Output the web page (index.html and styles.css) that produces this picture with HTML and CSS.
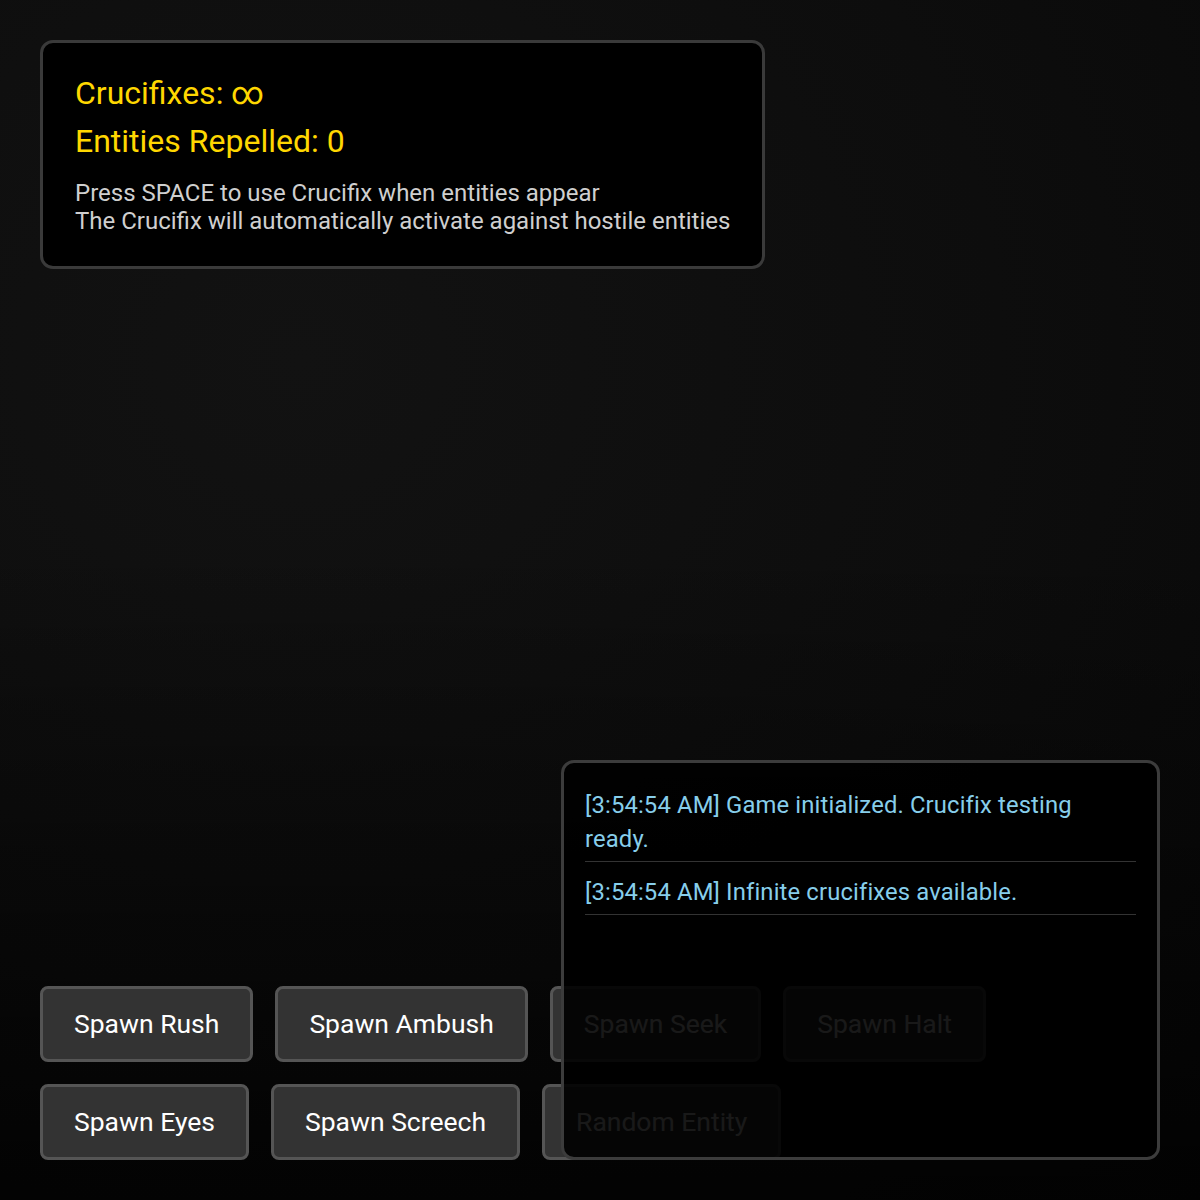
FILE: index.html
```html
<!DOCTYPE html>
<html lang="en">
<head>
<meta charset="utf-8">
<title>Crucifix Test</title>
<link rel="stylesheet" href="styles.css">
</head>
<body>
<div class="game">
  <div class="stats">
    <div class="stat-line">Crucifixes: <span class="inf">∞</span></div>
    <div class="stat-line">Entities Repelled: 0</div>
    <div class="help">
      <div>Press SPACE to use Crucifix when entities appear</div>
      <div>The Crucifix will automatically activate against hostile entities</div>
    </div>
  </div>

  <div class="controls">
    <button class="btn">Spawn Rush</button>
    <button class="btn">Spawn Ambush</button>
    <button class="btn">Spawn Seek</button>
    <button class="btn">Spawn Halt</button>
    <button class="btn">Spawn Eyes</button>
    <button class="btn">Spawn Screech</button>
    <button class="btn">Random Entity</button>
  </div>

  <div class="log">
    <div class="log-entry">[3:54:54 AM] Game initialized. Crucifix testing ready.</div>
    <div class="log-entry">[3:54:54 AM] Infinite crucifixes available.</div>
  </div>
</div>
</body>
</html>
```

FILE: styles.css
```css
* {
  box-sizing: border-box;
}

html, body {
  margin: 0;
  height: 100%;
}

body {
  font-family: Roboto, "Noto Sans", "Liberation Sans", sans-serif;
  color: #fff;
  background:
    linear-gradient(to bottom, rgba(0, 0, 0, 0) 45%, rgba(0, 0, 0, 0.75) 100%),
    radial-gradient(ellipse at 25% 30%, #121212 0%, #0d0d0d 55%, #080808 100%);
  overflow: hidden;
}

.game {
  position: relative;
  height: 100vh;
  padding: 40px;
  display: flex;
  flex-direction: column;
  align-items: flex-start;
}

/* HUD with counters */
.stats {
  width: fit-content;
  background: #000;
  border: 3px solid #3a3a3a;
  border-radius: 13px;
  padding: 30px 32px 31px 32px;
}

.stat-line {
  color: #ffd700;
  font-size: 32px;
  line-height: 40px;
  margin-bottom: 8px;
}

.help {
  margin-top: 18px;
  color: #cfcfcf;
  font-size: 24px;
  line-height: 28px;
}

/* spawn buttons */
.controls {
  margin-top: auto;
  display: flex;
  flex-wrap: wrap;
  gap: 22px;
  width: 100%;
}

.btn {
  font-family: inherit;
  font-size: 26.5px;
  line-height: 30px;
  color: #fff;
  background: #333;
  border: 3px solid #555;
  border-radius: 8px;
  padding: 20px 31px;
  cursor: pointer;
}

/* event log overlay */
.log {
  position: absolute;
  right: 40px;
  bottom: 40px;
  width: 599px;
  height: 400px;
  background: rgba(0, 0, 0, 0.9);
  border: 3px solid #3c3c3c;
  border-radius: 13px;
  padding: 20px 21px;
  overflow-y: auto;
}

.log-entry {
  color: #87ceeb;
  font-size: 23.8px;
  letter-spacing: 0.15px;
  line-height: 34px;
  padding: 5px 0;
  margin-bottom: 8px;
  border-bottom: 1px solid #333;
}
```
